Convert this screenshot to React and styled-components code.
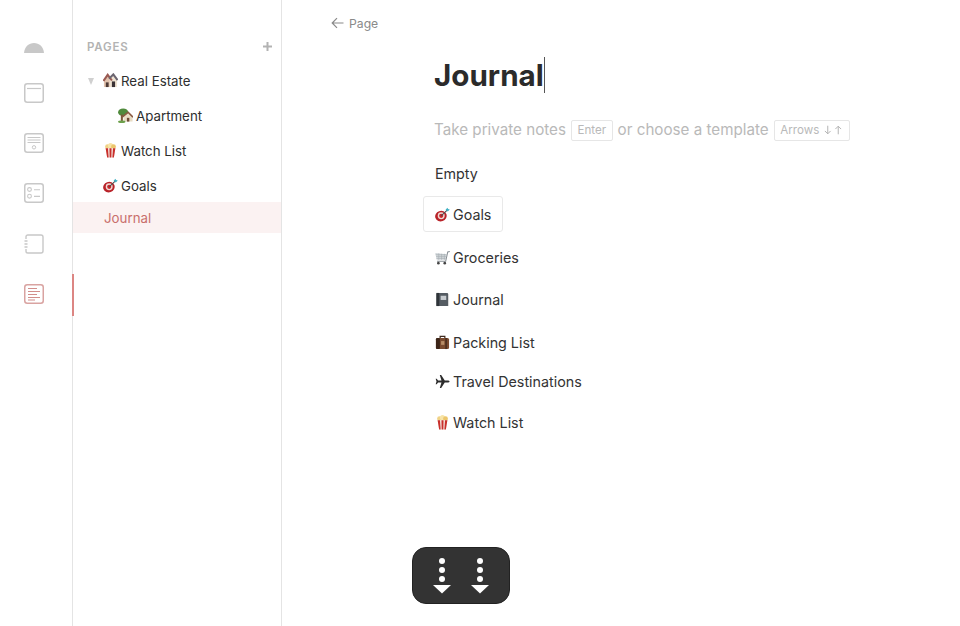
import React from "react";
import styled, { createGlobalStyle } from "styled-components";

const Global = createGlobalStyle`
  html, body { margin: 0; padding: 0; background: #fff; }
  body { font-family: Inter, "Liberation Sans", sans-serif; }
`;

const Page = styled.div`
  position: relative;
  display: flex;
  width: 960px;
  height: 626px;
  overflow: hidden;
  background: #fff;
  color: #2b2b2b;
`;

const Rail = styled.nav`
  position: relative;
  width: 73px;
  flex: none;
  display: flex;
  flex-direction: column;
  align-items: center;
  box-sizing: border-box;
  padding: 17.5px 0 0 0;
  border-right: 1px solid #e4e4e4;
`;

const RailItem = styled.div`
  position: relative;
  width: 72px;
  height: 50.25px;
  display: flex;
  align-items: center;
  justify-content: center;
  box-sizing: border-box;
  padding-right: 4px;
  color: ${(p) => (p.$active ? "#d9a3a1" : "#c8c8c8")};
`;

const ActiveMark = styled.span`
  position: absolute;
  left: 72px;
  top: 5px;
  width: 2px;
  height: 42px;
  background: #dc8683;
`;

const Sidebar = styled.aside`
  width: 209px;
  flex: none;
  box-sizing: border-box;
  border-right: 1px solid #e4e4e4;
  padding-top: 38px;
`;

const SectionHead = styled.div`
  display: flex;
  align-items: center;
  justify-content: space-between;
  height: 18px;
  padding: 0 9px 0 14px;
  font-size: 11.5px;
  font-weight: 600;
  letter-spacing: 0.8px;
  color: #b3b3b3;
  margin-bottom: 7px;
`;

const Plus = styled.svg`
  width: 9px;
  height: 9px;
  display: block;
  margin-top: -2px;
`;

const TreeRow = styled.div`
  display: flex;
  align-items: center;
  box-sizing: border-box;
  height: ${(p) => (p.$active ? 31 : 35)}px;
  margin-top: ${(p) => (p.$active ? -1 : 0)}px;
  padding-top: ${(p) => (p.$active ? 1 : 0)}px;
  padding-left: ${(p) => p.$indent}px;
  font-size: 13.3px;
  color: ${(p) => (p.$active ? "#c96f6c" : "#2e2e2e")};
  background: ${(p) => (p.$active ? "#fbf2f2" : "transparent")};
  gap: 3px;
`;

const Caret = styled.span`
  width: 0;
  height: 0;
  border-left: 3px solid transparent;
  border-right: 3px solid transparent;
  border-top: 7px solid #d0d0d0;
  margin-right: 6px;
  margin-top: 2px;
`;

const Main = styled.main`
  flex: 1;
  min-width: 0;
  display: flex;
  flex-direction: column;
`;

const Back = styled.div`
  display: flex;
  align-items: center;
  gap: 5px;
  height: 18px;
  margin: 14px 0 0 49px;
  font-size: 12.2px;
  color: #8a8a8a;
`;

const Content = styled.div`
  padding-left: 152px;
  display: flex;
  flex-direction: column;
  align-items: flex-start;
`;

const Title = styled.h1`
  margin: 20px 0 0 0;
  display: flex;
  align-items: center;
  height: 46px;
  font-size: 29.6px;
  font-weight: 700;
  color: #2b2b2b;
`;

const Cursor = styled.span`
  display: inline-block;
  width: 1px;
  height: 36px;
  background: #555;
`;

const Hint = styled.div`
  display: flex;
  align-items: center;
  margin-top: 20px;
  height: 23px;
  font-size: 15.2px;
  color: #b9b9b9;
  gap: 5px;
  white-space: nowrap;
`;

const Key = styled.span`
  display: inline-flex;
  align-items: center;
  gap: 4px;
  box-sizing: border-box;
  height: 21px;
  padding: 0 5.5px;
  margin-top: 1px;
  border: 1px solid #e6e6e6;
  border-radius: 2px;
  font-size: 11.6px;
  color: #b9b9b9;
`;

const Templates = styled.div`
  display: flex;
  flex-direction: column;
  align-items: flex-start;
  margin-top: 21px;
`;

const Template = styled.div`
  display: flex;
  align-items: center;
  gap: 3px;
  box-sizing: border-box;
  height: ${(p) => p.$h}px;
  font-size: 14.3px;
  color: #333;
  margin-left: ${(p) => (p.$selected ? -11 : 1)}px;
  padding: ${(p) => (p.$selected ? "0 11px" : "0")};
  border: ${(p) => (p.$selected ? "1px solid #e9e9e9" : "none")};
  border-radius: 3px;
  margin-top: ${(p) => p.$mt || 0}px;
`;

const Float = styled.div`
  position: absolute;
  left: 412px;
  top: 547px;
  width: 98px;
  height: 57px;
  box-sizing: border-box;
  padding-top: 2px;
  border-radius: 14px;
  background: #333333;
  display: flex;
  align-items: center;
  justify-content: center;
  gap: 18px;
  border: 1px solid #222;
`;

const Svg = styled.svg`
  display: block;
  flex: none;
`;

const DomeMark = styled(Svg)`
  margin-top: 11px;
`;

const Frame = () => <rect x="0.75" y="0.75" width="18.5" height="18.5" rx="2.5" fill="none" stroke="currentColor" strokeWidth="1.5" />;

const Dome = () => (
  <DomeMark width="20" height="10" viewBox="0 0 20 10">
    <path d="M0 10 C0.5 3.5 5 0 10 0 C15 0 19.5 3.5 20 10 Z" fill="#c8c8c8" />
  </DomeMark>
);
const PageIcon = () => (
  <Svg width="20" height="20" viewBox="0 0 20 20">
    <Frame />
    <path d="M3 5.5H17" stroke="currentColor" strokeWidth="1.2" />
  </Svg>
);
const NoteIcon = () => (
  <Svg width="20" height="20" viewBox="0 0 20 20">
    <Frame />
    <path d="M3.5 4.5H16.5M3.5 7H16.5M3.5 9.5H16.5" stroke="currentColor" strokeWidth="1" />
    <circle cx="10" cy="14.3" r="1.7" fill="none" stroke="currentColor" strokeWidth="1" />
  </Svg>
);
const ListIcon = () => (
  <Svg width="20" height="20" viewBox="0 0 20 20">
    <Frame />
    <circle cx="5.5" cy="6.5" r="1.9" fill="none" stroke="currentColor" strokeWidth="1.1" />
    <circle cx="5.5" cy="13.2" r="1.9" fill="none" stroke="currentColor" strokeWidth="1.1" />
    <path d="M10 6.8H16M10 13.4H16" stroke="currentColor" strokeWidth="1.1" />
  </Svg>
);
const BookIcon = () => (
  <Svg width="20" height="20" viewBox="0 0 20 20">
    <path d="M2 5V2.8C2 1.8 2.8 1 3.8 1H17C18.1 1 19 1.9 19 3V17C19 18.1 18.1 19 17 19H3.8C2.8 19 2 18.2 2 17.2V15" fill="none" stroke="currentColor" strokeWidth="1.4" />
    <path d="M0.5 7H3.5M0.5 10H3.5M0.5 13H3.5" stroke="currentColor" strokeWidth="1.4" />
  </Svg>
);
const JournalIcon = () => (
  <Svg width="20" height="20" viewBox="0 0 20 20">
    <Frame />
    <path d="M4 4.5H13M4 7.5H16M4 10.5H13M4 13.5H16M4 16H11" stroke="#d28e8b" strokeWidth="1.1" />
  </Svg>
);

const HouseEmoji = ({ size = 15 }) => (
  <Svg width={size} height={size} viewBox="0 0 16 16">
    <path d="M1 8 L5 3 L9 8 V15 H1Z" fill="#e2c3ae" />
    <path d="M7 7 L11 3 L15 8 V15 H7Z" fill="#efe3d2" />
    <path d="M0.5 8.5 L5 2 L9.5 8" fill="none" stroke="#9a5a52" strokeWidth="2.2" />
    <path d="M6.5 6 L11 1.5 L15.5 7.5" fill="none" stroke="#6b6570" strokeWidth="2.2" />
    <rect x="3" y="10" width="3" height="5" fill="#4d3a36" />
    <rect x="9.5" y="9" width="3.4" height="6" fill="#3a3236" />
  </Svg>
);
const TreeHouseEmoji = ({ size = 15 }) => (
  <Svg width={size} height={size} viewBox="0 0 16 16">
    <ellipse cx="5.5" cy="4.6" rx="5.4" ry="4.2" fill="#4f8a3c" />
    <rect x="3" y="7" width="2.2" height="7" fill="#7a5a3a" />
    <path d="M6 9 L11 5 L15.5 9 V14.5 H6Z" fill="#e8dcc4" />
    <path d="M4.5 9.8 L10.8 4.5 L16 9.8" fill="none" stroke="#8a5a42" strokeWidth="1.7" />
    <rect x="9.5" y="10.5" width="2.6" height="4" fill="#6e4a35" />
    <ellipse cx="4" cy="14.6" rx="4" ry="1.4" fill="#6da04c" />
  </Svg>
);
const PopcornEmoji = ({ size = 15 }) => (
  <Svg width={size} height={size} viewBox="0 0 16 16">
    <circle cx="4.8" cy="4" r="2.6" fill="#f0d286" />
    <circle cx="8" cy="2.8" r="2.7" fill="#f7e4a8" />
    <circle cx="11.2" cy="4" r="2.6" fill="#ecc66c" />
    <path d="M2.8 5.5 H13.2 L11.6 15.5 H4.4Z" fill="#f4e6e0" />
    <path d="M2.8 5.5 H5.3 L6 15.5 H4.4Z M6.9 5.5 H9.1 L8.9 15.5 H7.1Z M10.7 5.5 H13.2 L11.6 15.5 H10Z" fill="#c9302c" />
  </Svg>
);
const TargetEmoji = ({ size = 15 }) => (
  <Svg width={size} height={size} viewBox="0 0 16 16">
    <ellipse cx="6.3" cy="9.7" rx="6.2" ry="5.6" fill="#b92329" transform="rotate(-20 6.3 9.7)" />
    <circle cx="6.6" cy="9.4" r="3.7" fill="#f0d9d4" />
    <circle cx="6.6" cy="9.4" r="2.2" fill="#c8262b" />
    <path d="M6.6 9.4 L13 3.4" stroke="#4d4d4d" strokeWidth="1.1" />
    <path d="M11.3 3 L13.2 0.8 L13.9 2.2 L15.8 2.6 L13.6 4.8Z" fill="#3fb1c4" />
  </Svg>
);
const CartEmoji = ({ size = 15 }) => (
  <Svg width={size} height={size} viewBox="0 0 16 16">
    <path d="M0.3 3.2 L12.3 4.4 L11 10.5 H1.8Z" fill="#d2d7db" />
    <path d="M0.7 5 H12M1.1 7 H11.6M1.5 9 H11.2M4 3.5 V10.5M7 4 V10.5M10 4 V10.5" stroke="#a4abb0" strokeWidth="0.6" fill="none" />
    <path d="M15.8 1.5 L13.6 2 L11.4 12 H2.2" fill="none" stroke="#868e94" strokeWidth="1.1" />
    <circle cx="3.6" cy="14" r="1.4" fill="#444" />
    <circle cx="10.4" cy="14" r="1.4" fill="#444" />
  </Svg>
);
const NotebookEmoji = ({ size = 15 }) => (
  <Svg width={size} height={size} viewBox="0 0 16 16">
    <rect x="1.5" y="1" width="12.5" height="14" rx="1" fill="#555c63" />
    <rect x="1.5" y="1" width="3" height="14" fill="#2f3439" />
    <rect x="6" y="4" width="6" height="4.5" fill="#c8ccd0" />
    <rect x="14" y="2" width="1" height="13" fill="#d4d4d4" />
  </Svg>
);
const SuitcaseEmoji = ({ size = 15 }) => (
  <Svg width={size} height={size} viewBox="0 0 16 16">
    <path d="M5.5 3.5 V1.4 H10.5 V3.5" fill="none" stroke="#3f2a1e" strokeWidth="1.3" />
    <rect x="1" y="3.2" width="14" height="11.8" rx="1.6" fill="#7a4a2e" />
    <rect x="1" y="3.2" width="4.2" height="11.8" rx="1.2" fill="#3b2418" />
    <rect x="11" y="3.2" width="1.6" height="11.8" fill="#472a1b" />
    <rect x="6.5" y="6.5" width="3.5" height="4" fill="#b98d66" />
  </Svg>
);
const PlaneEmoji = ({ size = 15 }) => (
  <Svg width={size} height={size} viewBox="0 0 16 16">
    <path d="M15.5 8 C15.5 7.1 14.4 6.9 13.5 6.9 H10.4 L6.6 1 H5.1 L6.9 6.9 H3.3 L1.8 5 H0.7 L1.6 8 L0.7 11 H1.8 L3.3 9.1 H6.9 L5.1 15 H6.6 L10.4 9.1 H13.5 C14.4 9.1 15.5 8.9 15.5 8Z" fill="#2c2c2c" />
  </Svg>
);

const Dragger = () => (
  <Svg width="20" height="39" viewBox="0 0 20 39">
    <circle cx="10" cy="4" r="3" fill="#fff" />
    <circle cx="10" cy="13" r="3" fill="#fff" />
    <circle cx="10" cy="22" r="3" fill="#fff" />
    <path d="M1 28 H19 L10 36.5Z" fill="#fff" />
  </Svg>
);

const tree = [
  { label: "Real Estate", Icon: HouseEmoji, indent: 15, caret: true },
  { label: "Apartment", Icon: TreeHouseEmoji, indent: 45 },
  { label: "Watch List", Icon: PopcornEmoji, indent: 30 },
  { label: "Goals", Icon: TargetEmoji, indent: 30 },
];

const templates = [
  { label: "Goals", Icon: TargetEmoji, h: 36, mt: 12, selected: true },
  { label: "Groceries", Icon: CartEmoji, h: 22, mt: 14 },
  { label: "Journal", Icon: NotebookEmoji, h: 22, mt: 20 },
  { label: "Packing List", Icon: SuitcaseEmoji, h: 22, mt: 21 },
  { label: "Travel Destinations", Icon: PlaneEmoji, h: 22, mt: 17 },
  { label: "Watch List", Icon: PopcornEmoji, h: 22, mt: 19 },
];

export default function App() {
  return (
    <Page>
      <Global />
      <Rail>
        <RailItem><Dome /></RailItem>
        <RailItem><PageIcon /></RailItem>
        <RailItem><NoteIcon /></RailItem>
        <RailItem><ListIcon /></RailItem>
        <RailItem><BookIcon /></RailItem>
        <RailItem $active><JournalIcon /><ActiveMark /></RailItem>
      </Rail>
      <Sidebar>
        <SectionHead>
          PAGES
          <Plus viewBox="0 0 9 9"><path d="M4.5 0V9M0 4.5H9" stroke="#b3b3b3" strokeWidth="2" /></Plus>
        </SectionHead>
        {tree.map(({ label, Icon, indent, caret }) => (
          <TreeRow key={label} $indent={indent}>
            {caret && <Caret />}
            <Icon />
            {label}
          </TreeRow>
        ))}
        <TreeRow $indent={31} $active>Journal</TreeRow>
      </Sidebar>
      <Main>
        <Back>
          <Svg width="13" height="12" viewBox="0 0 13 12">
            <path d="M12.5 6H1.5M6 1.2L1.2 6L6 10.8" fill="none" stroke="#8a8a8a" strokeWidth="1.2" />
          </Svg>
          Page
        </Back>
        <Content>
          <Title>Journal<Cursor /></Title>
          <Hint>
            Take private notes <Key>Enter</Key> or choose a template
            <Key>
              Arrows
              <Svg width="20" height="10" viewBox="0 0 21 10">
                <path d="M5 0.5V9M2 6L5 9L8 6M16 9.5V1M13 4L16 1L19 4" fill="none" stroke="#b0b0b0" strokeWidth="1" />
              </Svg>
            </Key>
          </Hint>
          <Templates>
            <Template $h={22}>Empty</Template>
            {templates.map(({ label, Icon, h, mt, selected }) => (
              <Template key={label} $h={h} $mt={mt} $selected={selected}>
                <Icon />
                {label}
              </Template>
            ))}
          </Templates>
        </Content>
      </Main>
      <Float>
        <Dragger />
        <Dragger />
      </Float>
    </Page>
  );
}
